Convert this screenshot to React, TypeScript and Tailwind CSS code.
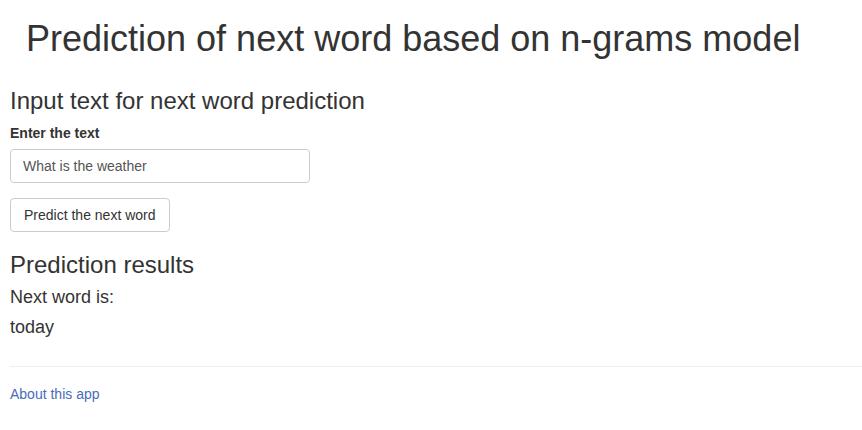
import React from "react";

export default function App() {
  return (
    <div
      className="w-[862px] h-[430px] bg-white text-[#333] overflow-hidden"
      style={{ fontFamily: '"Liberation Sans", Arial, Helvetica, sans-serif' }}
    >
      <h1 className="pl-[26px] pt-[19px] text-[36px] leading-[40px] font-normal">
        Prediction of next word based on n-grams model
      </h1>
      <div className="pl-[10px] flex flex-col">
        <h3 className="mt-[29px] text-[24px] leading-[26px] font-normal">
          Input text for next word prediction
        </h3>
        <label className="mt-[10px] text-[14px] leading-[18px] font-bold">Enter the text</label>
        <input
          readOnly
          value="What is the weather"
          className="mt-[7px] w-[300px] h-[34px] px-[12px] text-[14px] text-[#555] border border-[#ccc] rounded-[4px] outline-none"
        />
        <button className="mt-[15px] self-start h-[34px] px-[13px] text-[14px] text-[#333] bg-white border border-[#ccc] rounded-[4px]">
          Predict the next word
        </button>
        <h3 className="mt-[20px] text-[24px] leading-[26px] font-normal">Prediction results</h3>
        <div className="mt-[6px] text-[18px] leading-[26px]">Next word is:</div>
        <div className="mt-[4px] text-[18px] leading-[26px]">today</div>
        <hr className="mt-[26px] border-0 border-t border-[#eee]" />
        <a className="mt-[17px] text-[14px] leading-[20px] text-[#4a6cb8]">About this app</a>
      </div>
    </div>
  );
}
